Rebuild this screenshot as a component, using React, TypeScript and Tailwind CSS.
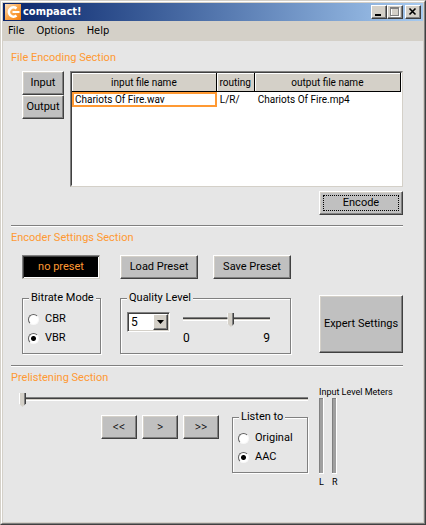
import { useState } from "react";
import type { ReactNode } from "react";

const raised =
  "bg-[#c0c0c0] border border-t-white border-l-white border-r-[#404040] border-b-[#404040] shadow-[inset_-1px_-1px_0_#808080,inset_1px_1px_0_#d4d0c8]";

function PushButton({ children, className = "" }: { children: ReactNode; className?: string }) {
  return (
    <button type="button" className={`${raised} flex shrink-0 items-center justify-center whitespace-nowrap ${className}`}>
      {children}
    </button>
  );
}

function CaptionButton({ label, className = "", children }: { label: string; className?: string; children: ReactNode }) {
  return (
    <button
      type="button"
      aria-label={label}
      className={`flex h-[14px] w-4 items-center justify-center border border-t-white border-l-white border-r-[#404040] border-b-[#404040] bg-[#d4d0c8] shadow-[inset_-1px_-1px_0_#808080] ${className}`}
    >
      {children}
    </button>
  );
}

function Radio({ name, label, checked, onChange }: { name: string; label: string; checked: boolean; onChange: () => void }) {
  return (
    <label className="flex h-[19px] items-center gap-[6px]">
      <input
        type="radio"
        name={name}
        checked={checked}
        onChange={onChange}
        className="size-[11px] appearance-none rounded-full border border-t-[#606060] border-l-[#606060] border-r-[#f8f8f8] border-b-[#f8f8f8] bg-white checked:bg-[radial-gradient(circle,#000_2px,#fff_3px)]"
      />
      {label}
    </label>
  );
}

function Group({ title, className = "", children }: { title: string; className?: string; children: ReactNode }) {
  return (
    <fieldset className={`min-w-0 border border-[#808080] shadow-[1px_1px_0_#fff,inset_1px_1px_0_#fff] ${className}`}>
      <legend className="ml-[6px] bg-[#e6e6e6] px-[2px] leading-4 whitespace-nowrap">{title}</legend>
      {children}
    </fieldset>
  );
}

function Slider({ label, max, initial, className = "" }: { label: string; max: number; initial: number; className?: string }) {
  return (
    <input
      type="range"
      aria-label={label}
      min={0}
      max={max}
      defaultValue={initial}
      className={`block h-[14px] appearance-none bg-transparent [&::-webkit-slider-runnable-track]:h-1 [&::-webkit-slider-runnable-track]:bg-[linear-gradient(#808080_1px,#404040_1px,#404040_2px,#d4d0c8_2px,#d4d0c8_3px,#fff_3px)] [&::-webkit-slider-thumb]:-mt-1 [&::-webkit-slider-thumb]:h-[14px] [&::-webkit-slider-thumb]:w-[7px] [&::-webkit-slider-thumb]:appearance-none [&::-webkit-slider-thumb]:bg-[linear-gradient(90deg,#fff_1px,#d4d0c8_1px,#d4d0c8_5px,#808080_5px,#808080_6px,#404040_6px)] [&::-webkit-slider-thumb]:[clip-path:polygon(0_0,100%_0,100%_75%,50%_100%,0_75%)] ${className}`}
    />
  );
}

function Heading({ children }: { children: ReactNode }) {
  return <h2 className="leading-4 text-[#ff9933]">{children}</h2>;
}

function Rule() {
  return <hr className="h-[2px] border-0 border-t border-b border-t-[#808080] border-b-white" />;
}

function Meter({ name }: { name: string }) {
  return (
    <div className="flex flex-col gap-[2px]">
      <div role="meter" aria-label={name} aria-valuenow={0} className="h-[76px] w-[5px] border-r border-b border-r-white border-b-white bg-[#a0a0a0] shadow-[inset_1px_1px_0_#808080]" />
      <span className="leading-3">{name}</span>
    </div>
  );
}

const columns = ["input file name", "routing", "output file name"];

export default function App() {
  const [mode, setMode] = useState("VBR");
  const [source, setSource] = useState("AAC");
  const [quality, setQuality] = useState("5");

  return (
    <div className="flex min-h-screen flex-col border border-t-[#d4d0c8] border-l-[#d4d0c8] border-r-[#404040] border-b-[#404040] bg-[#e6e6e6] font-['Roboto','Liberation_Sans',sans-serif] text-[11px] text-black">
      <div className="flex flex-1 flex-col border border-t-white border-l-white border-r-[#808080] border-b-[#808080]">
        <div className="flex flex-1 flex-col border border-[#d4d0c8]">
          <header className="flex h-[18px] shrink-0 items-center bg-linear-to-r from-[#0a246a] to-[#a6caf0] pr-[2px] pl-[2px]">
            <svg viewBox="0 0 16 16" className="size-4" aria-hidden="true">
              <defs>
                <linearGradient id="tile" x1="0" y1="0" x2="1" y2="1">
                  <stop offset="0" stopColor="#fde0bd" />
                  <stop offset=".5" stopColor="#fba54a" />
                  <stop offset="1" stopColor="#f57c0a" />
                </linearGradient>
              </defs>
              <rect width="16" height="16" fill="url(#tile)" />
              <path d="M11.500 4.500A4.600 4.600 0 1 0 11.500 11.500" fill="none" stroke="#fff" strokeWidth="2.600" />
              <path d="M7.500 8h7" stroke="#fff" strokeWidth="2" />
            </svg>
            <h1 className="ml-[2px] flex-1 font-['DejaVu_Sans_Condensed','DejaVu_Sans',sans-serif] text-[11px] leading-4 font-bold text-white">compaact!</h1>
            <CaptionButton label="Minimize">
              <svg viewBox="0 0 10 10" shapeRendering="crispEdges" className="size-[10px]"><path d="M1 7h6v2H1z" /></svg>
            </CaptionButton>
            <CaptionButton label="Maximize">
              <svg viewBox="0 0 10 10" shapeRendering="crispEdges" className="size-[10px]">
                <path d="M1.500 1.500h8v8h-8z" fill="none" stroke="#fff" />
                <path d="M0 0h9v9H0zM1 2v6h7V2z" fill="#808080" fillRule="evenodd" />
              </svg>
            </CaptionButton>
            <CaptionButton label="Close" className="ml-[2px]">
              <svg viewBox="0 0 10 10" className="size-[10px]"><path d="M1.500 1.500l6 6M7.500 1.500l-6 6" stroke="#000" strokeWidth="1.600" /></svg>
            </CaptionButton>
          </header>

          <nav className="flex h-5 shrink-0 items-center gap-3 bg-[#d4d0c8] pt-px pl-[5px] font-['DejaVu_Sans_Condensed','DejaVu_Sans',sans-serif] text-[11px]">
            <button type="button">File</button>
            <button type="button">Options</button>
            <button type="button">Help</button>
          </nav>

          <main className="flex flex-col pt-[9px] pr-5 pl-2">
            <section className="mb-[10px]">
              <Heading>File Encoding Section</Heading>
              <div className="mt-[5px] flex gap-[6px] pl-[11px]">
                <div className="flex flex-col">
                  <PushButton className="h-6 w-[42px]">Input</PushButton>
                  <PushButton className="h-6 w-[42px]">Output</PushButton>
                </div>
                <div className="h-[116px] flex-1 border border-t-[#808080] border-l-[#808080] border-r-[#d4d0c8] border-b-[#d4d0c8] bg-white">
                  <div className="h-full border border-t-[#404040] border-l-[#404040] border-r-white border-b-white">
                    <table className="w-full table-fixed border-separate border-spacing-0 text-[10px]">
                      <colgroup>
                        <col className="w-[44%]" />
                        <col className="w-[38px]" />
                        <col />
                      </colgroup>
                      <thead>
                        <tr className="h-[19px]">
                          {columns.map((c) => (
                            <th key={c} scope="col" className="border-r border-b border-black bg-[#d4d0c8] p-0 font-normal whitespace-nowrap shadow-[inset_1px_1px_0_#fff]">
                              {c}
                            </th>
                          ))}
                        </tr>
                      </thead>
                      <tbody>
                        <tr className="leading-[11px]">
                          <td className="border-2 border-[#ff9933] p-0 pl-px">Chariots Of Fire.wav</td>
                          <td className="p-0 pl-[3px]">L/R/</td>
                          <td className="p-0 pl-[3px]">Chariots Of Fire.mp4</td>
                        </tr>
                      </tbody>
                    </table>
                  </div>
                </div>
              </div>
              <PushButton className="mt-1 ml-auto h-6 w-[84px] p-[3px]">
                <span className="flex h-full w-full items-center justify-center border border-dotted border-black">Encode</span>
              </PushButton>
            </section>

            <Rule />

            <section className="mt-[3px] mb-[11px]">
              <Heading>Encoder Settings Section</Heading>
              <div className="mt-[9px] flex pl-[11px]">
                <output className="flex h-6 w-[78px] items-center justify-center border border-t-[#808080] border-l-[#808080] border-r-[#d4d0c8] border-b-[#d4d0c8] bg-black text-[#ff9933] shadow-[inset_1px_1px_0_#404040,inset_-1px_-1px_0_#fff]">no preset</output>
                <PushButton className="ml-5 h-6 w-[78px]">Load Preset</PushButton>
                <PushButton className="ml-[15px] h-6 w-[78px]">Save Preset</PushButton>
              </div>
              <div className="mt-[11px] flex pl-[11px]">
                <Group title="Bitrate Mode" className="h-[64px] w-[79px]">
                  <div className="flex flex-col pt-1 pl-[5px]">
                    {["CBR", "VBR"].map((m) => (
                      <Radio key={m} name="mode" label={m} checked={mode === m} onChange={() => setMode(m)} />
                    ))}
                  </div>
                </Group>
                <Group title="Quality Level" className="ml-[19px] h-[64px] w-[171px]">
                  <div className="flex gap-[13px] pt-[6px] pl-[6px]">
                    <div className="relative h-5 w-[43px]">
                      <select
                        aria-label="Quality Level"
                        value={quality}
                        onChange={(e) => setQuality(e.target.value)}
                        className="h-full w-full appearance-none border border-t-[#808080] border-l-[#808080] border-r-white border-b-white bg-white pl-[3px] text-xs shadow-[inset_1px_1px_0_#404040,inset_-1px_-1px_0_#d4d0c8]"
                      >
                        {["0", "1", "2", "3", "4", "5", "6", "7", "8", "9"].map((n) => (
                          <option key={n}>{n}</option>
                        ))}
                      </select>
                      <span className="pointer-events-none absolute top-[2px] right-[2px] flex h-4 w-[15px] items-center justify-center border border-t-white border-l-white border-r-[#404040] border-b-[#404040] bg-[#d4d0c8] shadow-[inset_-1px_-1px_0_#808080]">
                        <svg viewBox="0 0 7 4" className="h-1 w-[7px]"><path d="M0 0h7L3.500 4z" /></svg>
                      </span>
                    </div>
                    <div className="w-[87px]">
                      <Slider label="Quality" max={9} initial={5} className="w-full" />
                      <div className="mt-1 flex justify-between text-xs leading-4"><span>0</span><span>9</span></div>
                    </div>
                  </div>
                </Group>
                <PushButton className="mt-[5px] ml-auto h-[58px] w-[84px]">Expert Settings</PushButton>
              </div>
            </section>

            <Rule />

            <section className="mt-[3px]">
              <Heading>Prelistening Section</Heading>
              <div className="flex justify-between pl-2">
                <div className="w-[289px]">
                  <Slider label="Position" max={100} initial={0} className="mt-[6px] w-full" />
                  <div className="mt-[3px] flex justify-end gap-[5px]">
                    <PushButton className="mt-[6px] h-6 w-9 text-xs font-light">&lt;&lt;</PushButton>
                    <PushButton className="mt-[6px] h-6 w-9 text-xs font-light">&gt;</PushButton>
                    <PushButton className="mt-[6px] h-6 w-9 text-xs font-light">&gt;&gt;</PushButton>
                    <Group title="Listen to" className="ml-2 h-[64px] w-[76px]">
                      <div className="flex flex-col pt-1 pl-[5px]">
                        {["Original", "AAC"].map((s) => (
                          <Radio key={s} name="source" label={s} checked={source === s} onChange={() => setSource(s)} />
                        ))}
                      </div>
                    </Group>
                  </div>
                </div>
                <div className="w-[84px] text-[9px]">
                  <div className="leading-3 whitespace-nowrap">Input Level Meters</div>
                  <div className="flex gap-2">
                    <Meter name="L" />
                    <Meter name="R" />
                  </div>
                </div>
              </div>
            </section>
          </main>
        </div>
      </div>
    </div>
  );
}
